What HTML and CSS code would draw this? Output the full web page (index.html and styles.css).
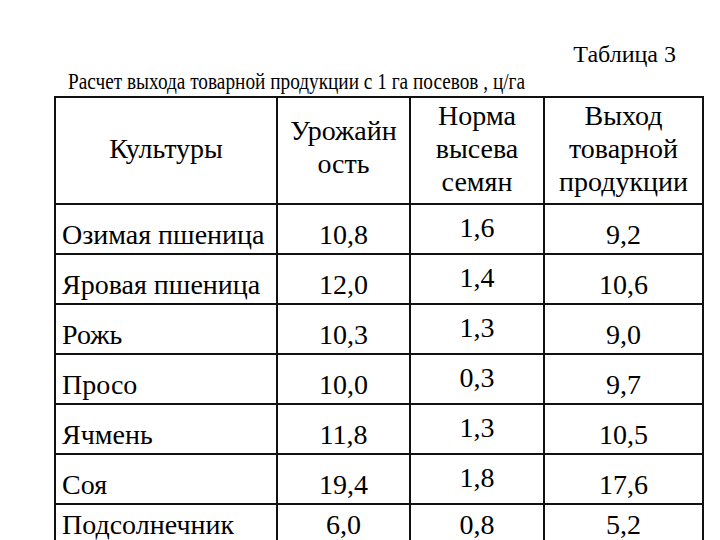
FILE: index.html
```html
<!DOCTYPE html>
<html lang="ru">
<head>
<meta charset="utf-8">
<title>Таблица 3</title>
<link rel="stylesheet" href="styles.css">
</head>
<body>
<div class="page">
  <p class="caption">Таблица 3</p>
  <p class="title"><span class="title-text">Расчет выхода товарной продукции с 1 га посевов , ц/га</span></p>
  <table class="crops">
    <colgroup>
      <col class="c-name">
      <col class="c-yield">
      <col class="c-norm">
      <col class="c-out">
    </colgroup>
    <thead>
      <tr class="head">
        <th>Культуры</th>
        <th class="h-yield">Урожайн<br>ость</th>
        <th>Норма<br>высева<br>семян</th>
        <th>Выход<br>товарной<br>продукции</th>
      </tr>
    </thead>
    <tbody>
      <tr><td class="name">Озимая пшеница</td><td>10,8</td><td class="norm">1,6</td><td>9,2</td></tr>
      <tr><td class="name">Яровая пшеница</td><td>12,0</td><td class="norm">1,4</td><td>10,6</td></tr>
      <tr><td class="name">Рожь</td><td>10,3</td><td class="norm">1,3</td><td>9,0</td></tr>
      <tr><td class="name">Просо</td><td>10,0</td><td class="norm">0,3</td><td>9,7</td></tr>
      <tr><td class="name">Ячмень</td><td>11,8</td><td class="norm">1,3</td><td>10,5</td></tr>
      <tr><td class="name">Соя</td><td>19,4</td><td class="norm">1,8</td><td>17,6</td></tr>
      <tr class="last"><td class="name">Подсолнечник</td><td>6,0</td><td class="norm">0,8</td><td>5,2</td></tr>
    </tbody>
  </table>
</div>
</body>
</html>
```

FILE: styles.css
```css
html, body {
  margin: 0;
  padding: 0;
  background: #fff;
  overflow: hidden;
}

.page {
  width: 720px;
  height: 540px;
  padding-top: 40px;
  box-sizing: border-box;
  font-family: "Liberation Serif", "Times New Roman", serif;
  color: #000;
}

.caption {
  margin: 0;
  padding-right: 44px;
  text-align: right;
  font-size: 24px;
  line-height: 28px;
}

.title {
  margin: 0 0 0 68px;
  font-size: 22.5px;
  line-height: 28px;
  white-space: nowrap;
}

.title-text {
  display: inline-block;
  transform: scaleX(0.857);
  transform-origin: left center;
}

.crops {
  margin-left: 54px;
  width: 650px;
  table-layout: fixed;
  border-collapse: collapse;
  font-size: 28px;
  line-height: 33px;
}

.c-name { width: 222px; }
.c-yield { width: 133px; }
.c-norm { width: 134px; }
.c-out { width: 159px; }

.crops th,
.crops td {
  border: 2px solid #111;
  padding: 0;
  text-align: center;
}

.crops th {
  font-weight: normal;
  height: 97px;
  vertical-align: middle;
  padding-bottom: 5px;
}

.crops th.h-yield {
  padding-bottom: 8px;
}

.crops td {
  height: 44px;
  vertical-align: bottom;
  padding-bottom: 2px;
  white-space: nowrap;
}

.crops td.name {
  text-align: left;
  padding-left: 6px;
}

.crops td.norm {
  vertical-align: middle;
  padding-bottom: 4px;
}

.crops tr.last td {
  vertical-align: top;
  padding-top: 3px;
  padding-bottom: 0;
}
```
